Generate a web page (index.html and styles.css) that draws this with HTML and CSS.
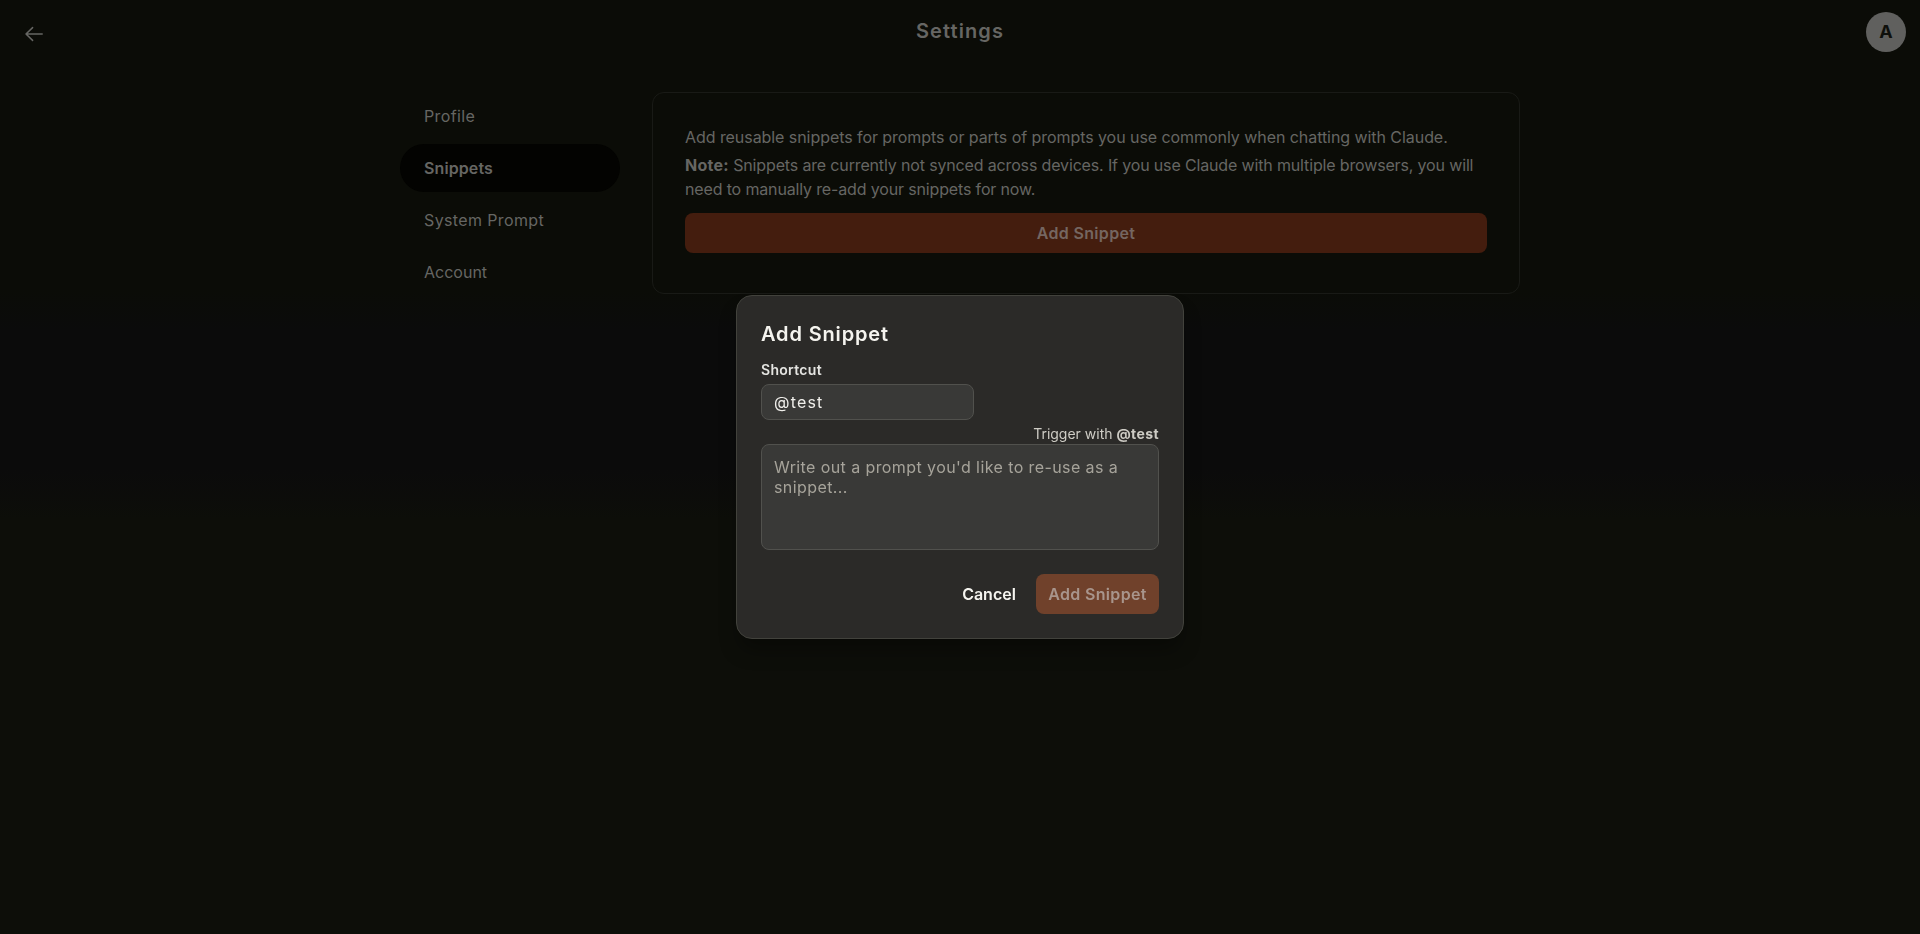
FILE: index.html
```html
<!DOCTYPE html>
<html lang="en">
<head>
  <meta charset="UTF-8" />
  <meta name="viewport" content="width=device-width, initial-scale=1" />
  <title>Settings</title>
  <link rel="stylesheet" href="styles.css">
</head>
<body>

<header class="topbar">
  <a href="#" class="back-btn" aria-label="Back">
    <svg width="20" height="16" viewBox="0 0 20 16" fill="none" stroke="currentColor" stroke-width="1.5" stroke-linecap="round" stroke-linejoin="round">
      <path d="M18.2 8H2M8.6 1.6L2 8L8.6 14.4" />
    </svg>
  </a>
  <h1>Settings</h1>
  <div class="avatar">A</div>
</header>

<main class="layout">
  <nav class="side-nav">
    <a href="#">Profile</a>
    <a href="#" class="active">Snippets</a>
    <a href="#">System Prompt</a>
    <a href="#" class="account">Account</a>
  </nav>

  <section class="card">
    <p class="intro">Add reusable snippets for prompts or parts of prompts you use commonly when chatting with Claude.</p>
    <p class="note"><strong>Note:</strong> Snippets are currently not synced across devices. If you use Claude with multiple browsers, you will <br>need to manually re-add your snippets for now.</p>
    <button class="add-btn">Add Snippet</button>
  </section>
</main>

<div class="overlay">
  <form class="modal">
    <h2>Add Snippet</h2>
    <label for="shortcut">Shortcut</label>
    <input type="text" id="shortcut" value="@test" />
    <p class="trigger">Trigger with <strong>@test</strong></p>
    <textarea id="prompt" placeholder="Write out a prompt you'd like to re-use as a snippet..."></textarea>
    <div class="actions">
      <button type="button" class="cancel-btn">Cancel</button>
      <button type="submit" class="submit-btn" disabled>Add Snippet</button>
    </div>
  </form>
</div>

</body>
</html>
```
FILE: styles.css
```css
* {
  box-sizing: border-box;
}

body {
  font-family: Inter, 'Liberation Sans', sans-serif;
  font-size: 16px;
  line-height: 24px;
  color: #666663;
  background: linear-gradient(#0b0c07 0, #0b0c07 290px, #0b0b0b 330px, #0b0b0b 470px, #0d0e09 520px, #0d0e09 100%);
  margin: 0;
  height: 100vh;
  overflow: hidden;
}

h1, h2, p {
  margin: 0;
}

a {
  color: inherit;
  text-decoration: none;
}

button {
  font-family: inherit;
  font-size: 16px;
  font-weight: 600;
  letter-spacing: 0.33px;
  height: 40px;
  padding: 0;
  border: none;
  border-radius: 8px;
}

.topbar {
  display: flex;
  justify-content: space-between;
  align-items: center;
  height: 64px;
  padding: 0 14px 0 24px;
}

.topbar h1 {
  font-size: 20px;
  font-weight: 600;
  letter-spacing: 1.1px;
  padding-bottom: 2px;
}

.back-btn {
  display: flex;
  width: 30px;
  padding-top: 4px;
}

.avatar {
  width: 40px;
  height: 40px;
  border-radius: 50%;
  background-color: #60605e;
  color: #0f100c;
  font-size: 18px;
  font-weight: 700;
  line-height: 40px;
  text-align: center;
}

.layout {
  display: flex;
  gap: 32px;
  width: 1120px;
  margin: 28px auto 0;
}

.side-nav {
  display: flex;
  flex-direction: column;
  gap: 4px;
  width: 220px;
}

.side-nav a {
  padding: 12px 24px;
  border-radius: 24px;
  letter-spacing: 0.37px;
}

.side-nav .active {
  background-color: #030301;
  font-weight: 600;
  letter-spacing: 0.1px;
}

.side-nav .account {
  letter-spacing: 0;
}

.card {
  flex: 1;
  height: 202px;
  padding: 32px;
  border: 1px solid #191a16;
  border-radius: 12px;
}

.intro {
  letter-spacing: -0.06px;
}

.note {
  margin-top: 4px;
  white-space: nowrap;
  letter-spacing: -0.15px;
}

.note strong {
  letter-spacing: 0.25px;
}

.add-btn {
  width: 100%;
  margin-top: 12px;
  background-color: #441d0e;
  color: #756661;
}

.overlay {
  position: fixed;
  inset: 0;
  display: flex;
  justify-content: center;
  align-items: center;
}

.modal {
  display: flex;
  flex-direction: column;
  width: 448px;
  height: 344px;
  padding: 24px;
  background-color: #2b2a28;
  border: 1px solid #42423c;
  border-radius: 16px;
  box-shadow: 0 14px 20px -4px rgba(0, 0, 0, 0.35);
}

.modal h2 {
  color: #f5f4ef;
  font-size: 20px;
  font-weight: 600;
  line-height: 28px;
  letter-spacing: 0.85px;
}

.modal label {
  color: #e5e5e2;
  font-size: 14px;
  font-weight: 600;
  line-height: 20px;
  letter-spacing: 0.3px;
  margin-top: 12px;
}

.modal input,
.modal textarea {
  font-family: inherit;
  font-size: 16px;
  color: #f0efeb;
  background-color: #393937;
  border: 1px solid #51514d;
  border-radius: 8px;
  outline: none;
}

.modal input {
  width: 213px;
  height: 36px;
  margin-top: 4px;
  padding: 0 12px;
  letter-spacing: 1.2px;
}

.trigger {
  color: #ceccc5;
  font-size: 14px;
  line-height: 20px;
  margin-top: 4px;
  text-align: right;
}

.trigger strong {
  letter-spacing: 0.4px;
}

.modal textarea {
  height: 106px;
  padding: 12px;
  line-height: 20px;
  letter-spacing: 0.41px;
  resize: none;
}

.modal textarea::placeholder {
  color: #a6a39a;
}

.actions {
  display: flex;
  justify-content: flex-end;
  gap: 8px;
  margin-top: 24px;
}

.cancel-btn {
  width: 78px;
  background: none;
  color: #f5f4ef;
  letter-spacing: 0;
}

.submit-btn {
  width: 123px;
  background-color: #70412b;
  color: #a8958c;
}
```
